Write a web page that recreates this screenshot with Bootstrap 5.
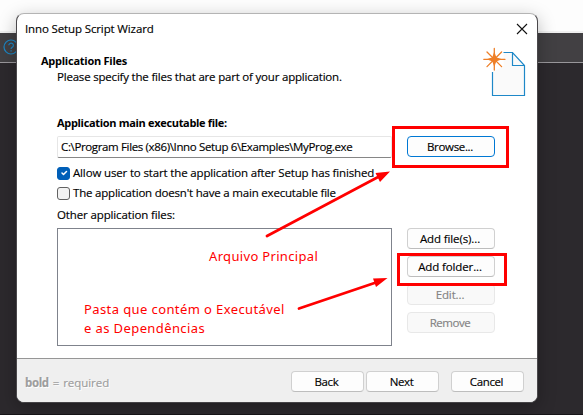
<!DOCTYPE html>
<html lang="en">
<head>
<meta charset="utf-8">
<meta name="viewport" content="width=device-width, initial-scale=1">
<title>Inno Setup Script Wizard</title>
<link href="https://cdn.jsdelivr.net/npm/bootstrap@5.3.0/dist/css/bootstrap.min.css" rel="stylesheet">
<style>
body{font:11.5px/16px "Open Sans","Noto Sans",sans-serif;color:#000;background:#2c292d;width:583px;height:415px}
.desk{height:415px;border-bottom:1px solid #171518}
.desk-top{height:33px;background:#fdfdfd;border-bottom:2px solid #f0f0f0}
.desk-bar{height:30px;background:#424043;border-bottom:1px solid #99979b;padding:6px 0 0 3px}
.wizard{left:16px;top:13px;width:522px;height:390px;border:1px solid #a9a9a9;border-color:#b4b4b4 #4a484b #454346 #4a484b;border-radius:8px;background:#fff;box-shadow:0 5px 18px rgba(0,0,0,.28);overflow:hidden;-webkit-text-stroke:.15px}
.title-row{height:30px;padding:7px 10px 0 8px}
.title-text{letter-spacing:-.13px}
.close-x{margin:3px 0 0}
.heading-row{height:66px;padding:7px 12px 0 24px}
.heading-text{padding-top:2px}
.b-text{font-size:11px;font-weight:700;-webkit-text-stroke:0}
.t-head{letter-spacing:-.25px}
.t-desc{letter-spacing:-.2px;padding-left:16px}
.fields{height:248px;padding:5px 0 0 40px}
.left-col{width:335px}
.t-main{letter-spacing:-.32px;height:21px}
.path-box.form-control{height:22px;padding:1px 3px 3px;font-size:11.5px;line-height:16px;letter-spacing:-.36px;color:#000;border:1px solid #e6e6e6;border-bottom-color:#868686;border-radius:2px}
.checks{padding-top:5px}
.check-row{height:20px}
.check-row .form-check-input{width:13px;height:13px;margin:0 3px 0 0;border:1px solid #626262;border-radius:3px;background-color:#f3f3f3;background-size:10px}
.check-row .form-check-input:checked{background-color:#005fb8;border-color:#005fb8}
.t-allow{letter-spacing:-.15px}
.t-noexe{letter-spacing:-.2px}
.t-other{letter-spacing:-.13px;padding-top:4px;height:25px}
.file-list{height:118px;border:1px solid #7f838c}
.btn.wz{--bs-btn-bg:#fdfdfd;--bs-btn-color:#000;--bs-btn-border-color:#d0d0d0;--bs-btn-padding-x:0;--bs-btn-padding-y:0;--bs-btn-font-size:11.5px;--bs-btn-border-radius:4px;--bs-btn-line-height:19px;--bs-btn-disabled-bg:#f9f9f9;--bs-btn-disabled-border-color:#e8e8e8;--bs-btn-disabled-color:#838383;--bs-btn-disabled-opacity:1;width:88px;height:21px;letter-spacing:-.12px;padding-right:2px;border-bottom-color:#bdbdbd}
.btn.wz:disabled{border-bottom-color:#e8e8e8}
.btn.wz.focus-blue{border-color:#0078d4}
.btn.wz.tight{letter-spacing:-.33px}
.btn.wz.rm{letter-spacing:-.45px}
.side{padding-left:15px}
.browse{margin-top:21px}
.stack{margin-top:71px;gap:7px}
.foot{height:44px;background:#efefef;border-top:1px solid #969696;padding:12px 13px 0 8px}
.foot .btn.wz{width:73px;letter-spacing:-.38px}
.nav-buttons{gap:2px}
.cancel-gap{padding-left:10px}
.hint{color:#9d9d9d;text-shadow:1px 1px 0 #fff;padding-top:4px;letter-spacing:-.05px;word-spacing:1px}
.hint b{letter-spacing:-.35px}
.note{color:#f00;font:13px/19px "Noto Sans","Open Sans",sans-serif;letter-spacing:.33px}
.note-a{left:209px;top:247px}
.note-b{left:84px;top:300px;letter-spacing:.4px}
.marks{left:0;top:0}
</style>
</head>
<body class="overflow-hidden position-relative">
<div class="desk">
  <div class="desk-top"></div>
  <div class="desk-bar">
    <svg class="d-block" width="16" height="16" viewBox="0 0 16 16" fill="none" stroke="#1c86c4" stroke-width="1.2"><circle cx="8" cy="8" r="7"/><path d="M5.800 6.300a2.300 2.200 0 1 1 3.400 2c-.8.5-1.100.8-1.100 1.700M8.100 11.200v1.200"/></svg>
  </div>
</div>

<main class="wizard position-absolute d-flex flex-column">
  <header class="title-row d-flex justify-content-between">
    <span class="title-text">Inno Setup Script Wizard</span>
    <svg class="close-x overflow-visible" width="10" height="10" viewBox="0 0 10 10" stroke="#111" stroke-width="1.100"><path d="M0 0 10 10M10 0 0 10"/></svg>
  </header>
  <section class="heading-row d-flex justify-content-between">
    <div class="heading-text">
      <div class="b-text t-head">Application Files</div>
      <div class="t-desc">Please specify the files that are part of your application.</div>
    </div>
    <svg class="overflow-visible mt-px" width="42" height="48" viewBox="0 -1 42 48" fill="none">
      <path d="M20.500.5H29.500L41.500 13.500V43.500H9.500V20L20.500 14Z" fill="#fafafa"/>
      <path d="M20.500.5H29.500L41.500 13.500V43.500H9.500V20M29.500.5V13.500H41.500" stroke="#1e88c8" stroke-width="1.200"/>
      <g stroke="#ee7f27" stroke-width="1.300" stroke-linecap="round">
        <path d="M11.300-3.500V18M.8 7.300H22M4 0 18.600 14.600M18.600 0 4 14.600"/>
        <path d="M11.300 1.500 12.800 5.800 17 7.300 12.800 8.800 11.300 13 9.800 8.800 5.500 7.300 9.800 5.800Z" fill="#ee7f27"/>
      </g>
    </svg>
  </section>
  <section class="fields d-flex">
    <div class="left-col">
      <div class="b-text t-main">Application main executable file:</div>
      <input class="form-control path-box" type="text" value="C:\Program Files (x86)\Inno Setup 6\Examples\MyProg.exe">
      <div class="checks">
        <label class="check-row d-flex align-items-center"><input class="form-check-input" type="checkbox" checked><span class="t-allow">Allow user to start the application after Setup has finished</span></label>
        <label class="check-row d-flex align-items-center"><input class="form-check-input" type="checkbox"><span class="t-noexe">The application doesn't have a main executable file</span></label>
      </div>
      <div class="t-other">Other application files:</div>
      <div class="file-list"></div>
    </div>
    <div class="side">
      <button class="btn wz focus-blue tight browse d-block">Browse...</button>
      <div class="stack d-flex flex-column">
        <button class="btn wz">Add file(s)...</button>
        <button class="btn wz">Add folder...</button>
        <button class="btn wz" disabled>Edit...</button>
        <button class="btn wz rm" disabled>Remove</button>
      </div>
    </div>
  </section>
  <footer class="foot d-flex justify-content-between">
    <span class="hint"><b>bold</b> = required</span>
    <div class="nav-buttons d-flex">
      <button class="btn wz">Back</button>
      <button class="btn wz">Next</button>
      <div class="cancel-gap"><button class="btn wz d-block">Cancel</button></div>
    </div>
  </footer>
</main>

<svg class="marks position-absolute" width="583" height="415" viewBox="0 0 583 415" fill="none" stroke="#f00" stroke-width="3">
  <rect x="393.500" y="127.500" width="114" height="39"/>
  <rect x="398.500" y="254.500" width="107" height="30"/>
  <path d="M267 236 380 176M299 308.500 376 282.500" stroke-linecap="round" stroke-width="2.700"/>
  <path d="M390 171.500 375.500 173 380 182ZM387.500 278 373 278.500 376 287Z" fill="#f00" stroke="none"/>
</svg>
<div class="note note-a position-absolute">Arquivo Principal</div>
<div class="note note-b position-absolute">Pasta que contém o Executável<br>e as Dependências</div>
<script src="https://cdn.jsdelivr.net/npm/bootstrap@5.3.0/dist/js/bootstrap.bundle.min.js"></script>
</body>
</html>
